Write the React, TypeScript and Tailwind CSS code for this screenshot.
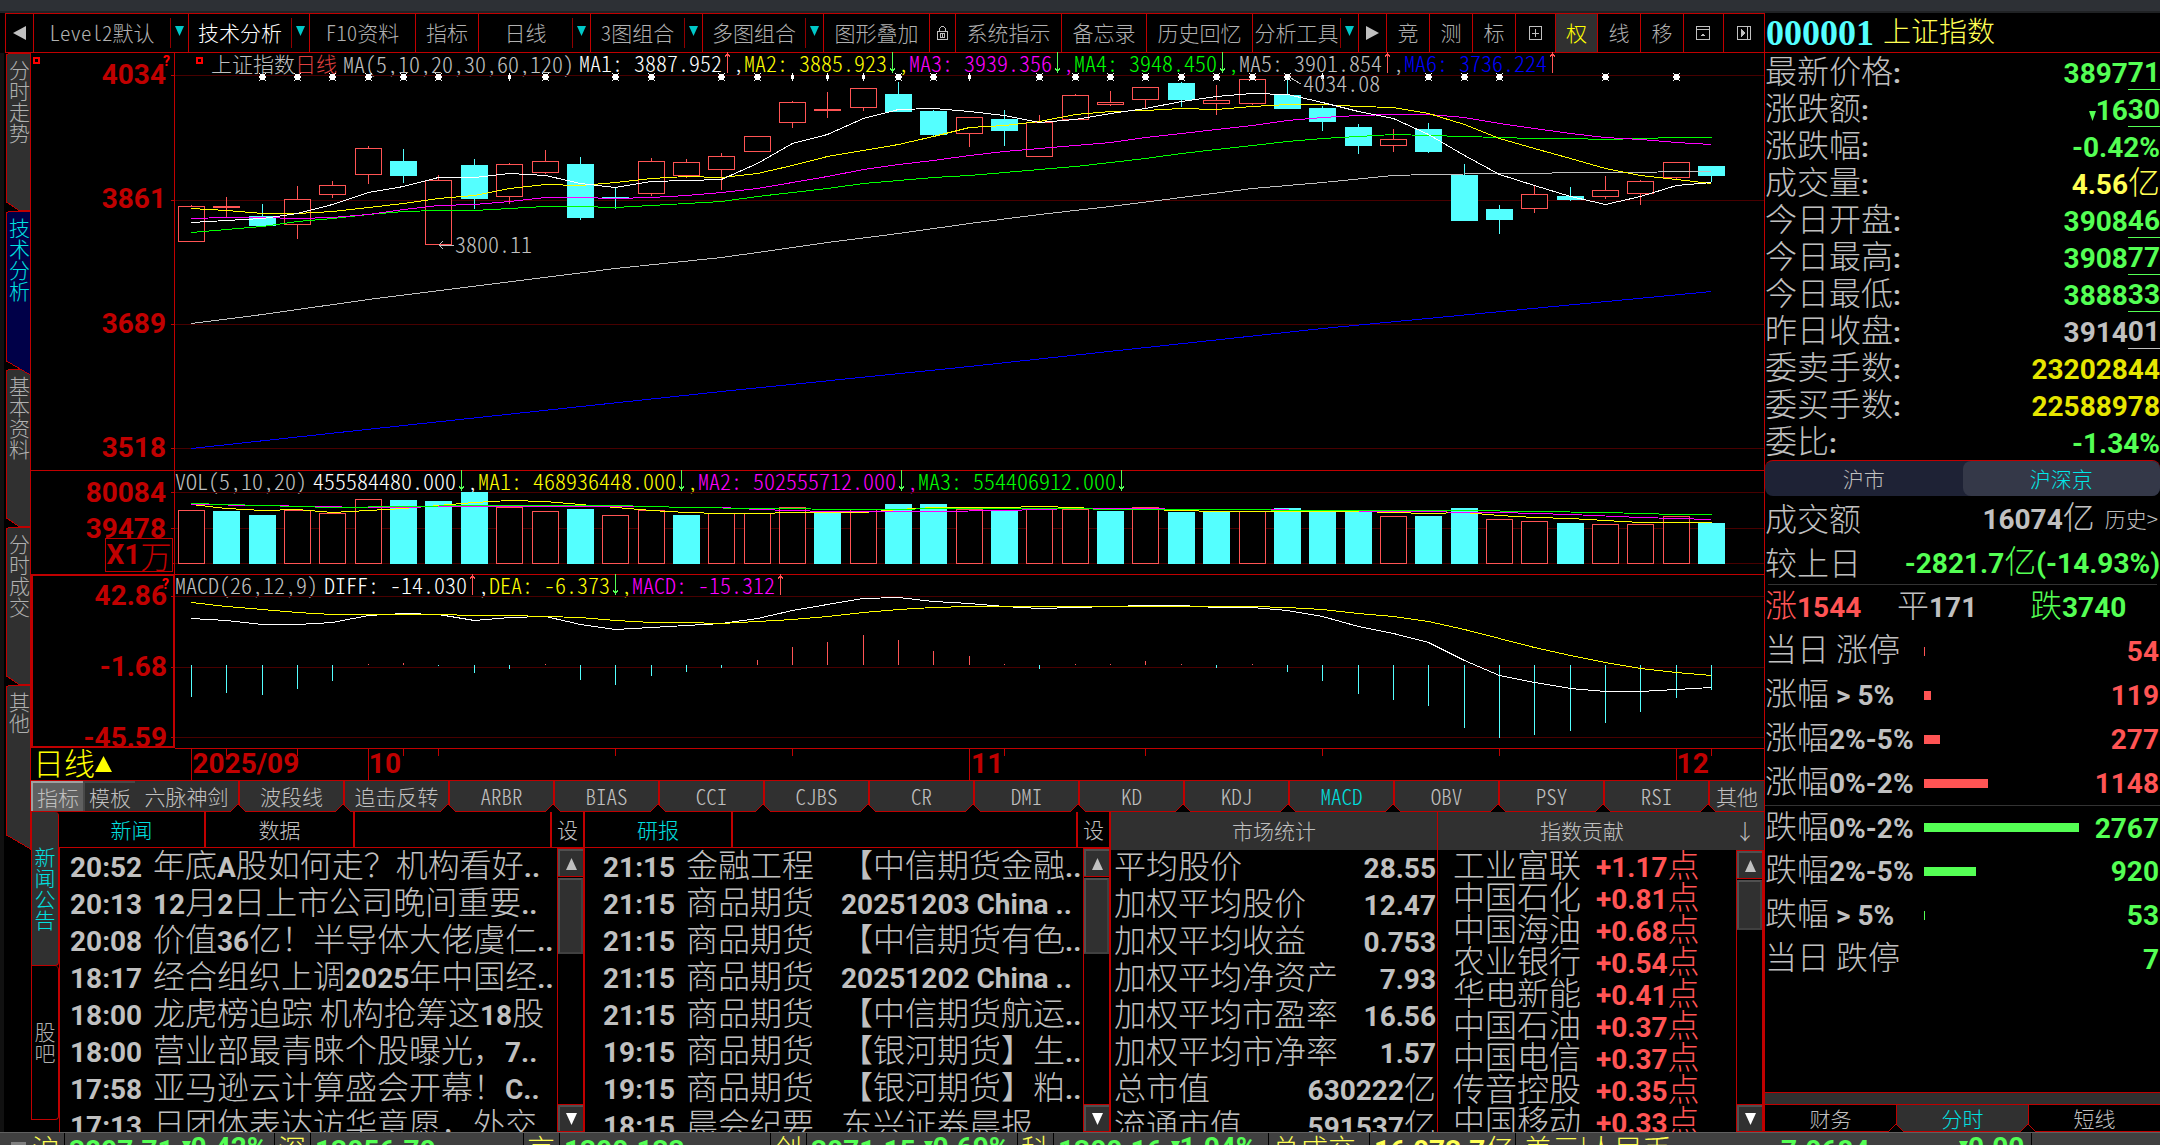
import type { ReactNode } from 'react';
import clsx from 'clsx';

type Dir = 'up' | 'down';

const STEP = 35.35;
const FIRST = 16;
const PLOT_W = 1589;
const HEADER_BOTTOM = { price: 75, volume: 492, macd: 596 };
const UP = '#ff5454';
const DOWN = '#54ffff';

const cx = (i: number) => Math.round(FIRST + i * STEP) + 0.5;

// [dir, body top, body bottom, high, low] in thirds of a pixel
const CANDLES: [Dir, number, number, number, number][] = [
  ['up', 619, 724, 615, 724],
  ['up', 619, 623, 591, 650],
  ['down', 648, 676, 612, 676],
  ['up', 598, 674, 558, 717],
  ['up', 556, 584, 543, 594],
  ['up', 445, 524, 438, 552],
  ['down', 483, 525, 447, 549],
  ['up', 541, 733, 525, 733],
  ['down', 495, 594, 477, 627],
  ['up', 493, 590, 489, 612],
  ['up', 484, 518, 450, 522],
  ['down', 492, 651, 471, 660],
  ['down', 592, 596, 562, 627],
  ['up', 484, 581, 474, 588],
  ['up', 487, 527, 477, 533],
  ['up', 469, 509, 459, 570],
  ['up', 409, 455, 409, 455],
  ['up', 307, 367, 303, 384],
  ['up', 328, 332, 276, 354],
  ['up', 265, 323, 265, 333],
  ['down', 282, 333, 246, 333],
  ['down', 333, 402, 330, 408],
  ['up', 352, 401, 352, 441],
  ['down', 357, 390, 330, 438],
  ['up', 367, 470, 345, 470],
  ['up', 286, 359, 282, 359],
  ['up', 307, 314, 273, 318],
  ['up', 262, 299, 262, 324],
  ['down', 249, 297, 246, 321],
  ['up', 301, 311, 255, 345],
  ['up', 238, 311, 238, 315],
  ['down', 285, 324, 234, 324],
  ['down', 324, 363, 318, 393],
  ['down', 381, 435, 372, 462],
  ['up', 418, 437, 387, 456],
  ['down', 387, 453, 369, 459],
  ['down', 525, 660, 492, 660],
  ['down', 627, 657, 615, 702],
  ['up', 583, 626, 556, 639],
  ['down', 588, 597, 561, 603],
  ['up', 571, 590, 528, 597],
  ['up', 544, 581, 540, 615],
  ['up', 487, 533, 487, 538],
  ['down', 498, 525, 498, 545],
];

type Point = [number, number];
const seq = (values: number[]): Point[] => values.map((v, i) => [i, v]);

const PRICE_LINES: { color: string; points: Point[] }[] = [
  {
    color: '#c0c0c0',
    points: [
      [0, 970], [2, 943], [5, 898], [12, 804], [15, 770], [16, 757], [18, 727], [20, 700], [22, 670],
      [24, 643], [26, 618], [28, 592], [30, 565], [32, 545], [34, 526], [35, 522], [37, 520], [40, 517], [43, 514],
    ],
  },
  { color: '#0000ff', points: [[0, 1345], [6, 1274], [15, 1174], [22, 1098], [32, 984], [43, 873]] },
  {
    color: '#00ff00',
    points: seq([
      697, 686, 677, 664, 654, 643, 634, 629, 631, 625, 619, 619, 620, 616, 610, 604, 589, 577, 565, 550, 539, 532,
      524, 517, 508, 499, 487, 473, 460, 448, 436, 424, 415, 409, 403, 404, 408, 412, 413, 415, 418, 415, 412, 412,
    ]),
  },
  {
    color: '#ff00ff',
    points: seq([
      653, 650, 652, 655, 652, 641, 627, 616, 613, 602, 590, 592, 595, 591, 584, 577, 565, 545, 529, 508, 493, 480,
      466, 454, 445, 436, 427, 412, 398, 388, 376, 360, 350, 346, 343, 341, 352, 370, 383, 400, 411, 418, 427, 433,
    ]),
  },
  {
    color: '#ffff00',
    points: seq([
      625, 631, 639, 640, 634, 622, 609, 594, 586, 565, 553, 555, 547, 535, 529, 532, 519, 495, 469, 449, 433, 408,
      382, 374, 362, 343, 334, 329, 325, 328, 318, 313, 313, 317, 322, 338, 373, 413, 444, 475, 505, 525, 538, 550,
    ]),
  },
  {
    color: '#ffffff',
    points: seq([
      667, 660, 655, 640, 612, 577, 558, 532, 532, 520, 526, 550, 562, 542, 541, 538, 488, 430, 401, 355, 328, 325,
      334, 346, 367, 358, 340, 323, 303, 288, 280, 283, 305, 332, 355, 402, 464, 523, 554, 587, 613, 589, 556, 545,
    ]),
  },
];

const STARS = [2, 3, 4, 5, 6, 7, 9, 10, 12, 13, 15, 16, 17, 18, 19, 20, 21, 22, 24, 25, 26, 27, 28, 29, 30, 31, 32, 35, 36, 37, 40, 42];
const NARROW_STARS = [9, 17, 18, 19, 22, 32];

const VOLUME_TOPS = [
  721, 723, 735, 721, 730, 688, 690, 693, 666, 711, 724, 717, 736, 721, 735, 730, 730, 712, 729, 718, 702, 702, 717,
  720, 717, 716, 723, 712, 726, 726, 722, 714, 722, 722, 739, 738, 714, 748, 754, 759, 763, 763, 739, 759,
];
const VOLUME_DOWN = [1, 2, 6, 7, 8, 11, 14, 18, 20, 21, 23, 26, 28, 29, 31, 32, 33, 35, 36, 39, 43];

const VOLUME_LINES: { color: string; points: Point[] }[] = [
  {
    color: '#ffff00',
    points: seq([
      702, 714, 720, 718, 726, 721, 715, 705, 695, 690, 694, 702, 712, 721, 727, 730, 730, 727, 727, 725, 717, 712,
      712, 712, 708, 712, 717, 717, 719, 722, 722, 722, 722, 722, 725, 730, 726, 734, 740, 744, 750, 757, 757, 757,
    ]),
  },
  {
    color: '#ff00ff',
    points: [
      [0, 702], [2, 706], [5, 710], [8, 708], [12, 708], [15, 710], [16, 717], [18, 722], [20, 724], [21, 722],
      [23, 720], [25, 715], [30, 716], [34, 722], [37, 727], [39, 733], [41, 741], [43, 748],
    ],
  },
  {
    color: '#00ff00',
    points: [
      [0, 700], [2, 704], [4, 712], [8, 706], [12, 706], [14, 712], [16, 714], [19, 718], [22, 714], [24, 714],
      [27, 718], [34, 721], [36, 719], [38, 722], [40, 727], [42, 733], [43, 733],
    ],
  },
];

const MACD_LINES: { color: string; points: Point[] }[] = [
  {
    color: '#ffffff',
    points: seq([
      145, 149, 163, 163, 157, 134, 130, 132, 149, 142, 137, 163, 178, 170, 165, 160, 145, 121, 103, 83, 80, 93, 98,
      108, 115, 110, 109, 104, 106, 112, 110, 120, 138, 168, 190, 215, 271, 316, 337, 355, 364, 364, 356, 352,
    ]),
  },
  {
    color: '#ffff00',
    points: seq([
      97, 109, 118, 127, 133, 133, 133, 133, 136, 136, 137, 142, 149, 155, 155, 158, 153, 147, 138, 127, 118, 112,
      109, 109, 109, 109, 109, 109, 109, 109, 109, 112, 118, 128, 139, 153, 177, 204, 231, 255, 277, 295, 307, 316,
    ]),
  },
];
const MACD_BARS = [
  380, 369, 375, 357, 333, 283, 279, 289, 309, 297, 282, 330, 345, 318, 306, 293, 270, 230, 216, 195, 210, 243, 258,
  282, 297, 282, 282, 273, 282, 294, 282, 306, 333, 372, 390, 408, 474, 504, 495, 483, 459, 426, 384, 360,
];

const MONTH_TICKS = [0, 5, 22, 42];
const DAY_TICKS = [1, 3, 6, 7, 12, 17, 23, 27, 32, 37, 43];

const ASCII_RUN = /([\x20-\x7e]+)/;

/* Han text in the regular weight, digits and latin in the heavy one */
const Mix = ({ text }: { text: string }) => (
  <>
    {text.split(ASCII_RUN).map((part, i) =>
      ASCII_RUN.test(part) ? (
        <span key={i} className="font-[Roboto,sans-serif] text-[28px] font-bold whitespace-pre">
          {part}
        </span>
      ) : (
        part
      ),
    )}
  </>
);

const path = (points: Point[], toY: (v: number) => number) =>
  points.map(([i, v]) => `${cx(i)},${Math.round(toY(v)) + 0.5}`).join(' ');

const Plot = ({ height, grid, children }: { height: number; grid: number[]; children: ReactNode }) => (
  <svg
    viewBox={`0 0 ${PLOT_W} ${height}`}
    height={height}
    preserveAspectRatio="none"
    shapeRendering="crispEdges"
    className="block w-full overflow-visible"
    fill="none"
  >
    {grid.map((y) => (
      <line key={y} x1="0" x2={PLOT_W} y1={y + 0.5} y2={y + 0.5} stroke="#480000" />
    ))}
    {grid.map((y) => (
      <line key={`t${y}`} x1="-4" x2="0" y1={y + 0.5} y2={y + 0.5} stroke="#c00000" />
    ))}
    {children}
  </svg>
);

const Star = ({ x, narrow }: { x: number; narrow: boolean }) =>
  narrow ? (
    <path d={`M${x - 1.5} 0H${x + 1.5}V4H${x - 1.5}ZM${x - 0.5} -2H${x + 0.5}V6H${x - 0.5}Z`} fill="#fff" />
  ) : (
    <g fill="#fff">
      <rect x={x - 2.5} y="-1" width="5" height="6" />
      <path d={`M${x - 3.5} -2h1v1h-1zM${x + 2.5} -2h1v1h-1zM${x - 3.5} 5h1v1h-1zM${x + 2.5} 5h1v1h-1zM${x - 3.5} 1h7v2h-7z`} />
    </g>
  );

const PriceChart = () => {
  const toY = (v: number) => v / 3 - HEADER_BOTTOM.price;
  return (
    <Plot height={395} grid={[0, 125, 249, 373]}>
      {CANDLES.map(([dir, top, bottom, high, low], i) => {
        const color = dir === 'up' ? UP : DOWN;
        const y = Math.round(toY(top));
        const h = Math.max(1, Math.round((bottom - top) / 3));
        return (
          <g key={i} stroke={color}>
            <line x1={cx(i)} x2={cx(i)} y1={toY(high)} y2={y} />
            <line x1={cx(i)} x2={cx(i)} y1={y + h} y2={toY(low)} />
            <rect x={cx(i) - 13} y={y + 0.5} width="26" height={h} fill={dir === 'up' ? '#000' : color} />
          </g>
        );
      })}
      {PRICE_LINES.map(({ color, points }) => (
        <polyline key={color} points={path(points, toY)} stroke={color} />
      ))}
      {STARS.map((i) => (
        <Star key={i} x={cx(i)} narrow={NARROW_STARS.includes(i)} />
      ))}
      <path d="M1114 2L1126 9M264 170H279M268 166L264 170L268 174" stroke="#c0c0c0" />
    </Plot>
  );
};

const VolumeChart = () => {
  const toY = (v: number) => v / 3 + 270 - HEADER_BOTTOM.volume;
  return (
    <Plot height={82} grid={[0, 36, 71]}>
      {VOLUME_TOPS.map((v, i) => {
        const down = VOLUME_DOWN.includes(i);
        const y = Math.round(toY(v));
        return (
          <rect
            key={i}
            x={cx(i) - 13}
            y={y + 0.5}
            width="26"
            height={71 - y}
            stroke={down ? DOWN : UP}
            fill={down ? DOWN : '#000'}
          />
        );
      })}
      {VOLUME_LINES.map(({ color, points }) => (
        <polyline key={color} points={path(points, toY)} stroke={color} />
      ))}
    </Plot>
  );
};

const MacdChart = () => {
  const toY = (v: number) => v / 3 + 570 - HEADER_BOTTOM.macd;
  return (
    <Plot height={152} grid={[0, 71, 141]}>
      {MACD_BARS.map((v, i) => (
        <line key={i} x1={cx(i)} x2={cx(i)} y1={toY(285)} y2={toY(v)} stroke={v < 285 ? UP : DOWN} />
      ))}
      {MACD_LINES.map(({ color, points }) => (
        <polyline key={color} points={path(points, toY)} stroke={color} />
      ))}
    </Plot>
  );
};

const Arrow = ({ dir }: { dir: Dir }) => (
  <svg width="11" height="22" viewBox="0 0 11 22" shapeRendering="crispEdges" fill="none" stroke={dir === 'up' ? UP : '#54ff54'}>
    <path d={dir === 'up' ? 'M5.5 1V21M3 5L5.5 1L8 5' : 'M5.5 0V20M3 16L5.5 20L8 16'} />
  </svg>
);

interface Reading {
  text: string;
  dir: Dir;
  color: string;
  last?: boolean;
}

const Readings = ({ items }: { items: Reading[] }) => (
  <>
    {items.map(({ text, dir, color, last }) => (
      <span key={text} className={clsx('flex', color)}>
        {text}
        <Arrow dir={dir} />
        {!last && <span className="w-[11px]">,</span>}
      </span>
    ))}
  </>
);

const ChartHeader = ({ children, first }: { children: ReactNode; first?: boolean }) => (
  <div
    className={clsx(
      'flex h-[22px] items-center pb-[2px] text-[22px] leading-[21px] whitespace-pre text-[#c0c0c0] [font-feature-settings:"hwid"]',
      first ? 'pl-9' : 'border-t border-[#c00000]',
    )}
  >
    {children}
  </div>
);

const AXIS = 'font-[Roboto,sans-serif] text-[28px] leading-[28px] font-bold text-[#c00000]';

const TOOLS: { label: string; width: string; menu?: boolean; state?: 'bright' | 'on' }[] = [
  { label: 'Level2默认', width: 'w-[155px]', menu: true },
  { label: '技术分析', width: 'w-[121px]', menu: true, state: 'bright' },
  { label: 'F10资料', width: 'w-[106px]' },
  { label: '指标', width: 'w-[63px]' },
  { label: '日线', width: 'w-[112px]', menu: true },
  { label: '3图组合', width: 'w-[112px]', menu: true },
  { label: '多图组合', width: 'w-[121px]', menu: true },
  { label: '图形叠加', width: 'w-[106px]' },
  { label: 'lock', width: 'w-[26px]' },
  { label: '系统指示', width: 'w-[106px]' },
  { label: '备忘录', width: 'w-[85px]' },
  { label: '历史回忆', width: 'w-[106px]' },
  { label: '分析工具', width: 'w-[106px]', menu: true },
  { label: 'next', width: 'w-[28px]' },
  { label: '竞', width: 'w-[43px]' },
  { label: '测', width: 'w-[43px]' },
  { label: '标', width: 'w-[43px]' },
  { label: 'grid', width: 'w-[40px]' },
  { label: '权', width: 'w-[42px]', state: 'on' },
  { label: '线', width: 'w-[43px]' },
  { label: '移', width: 'w-[43px]' },
  { label: 'dock', width: 'w-[40px]' },
  { label: 'expand', width: 'w-[40px]' },
];

const TOOL_ICONS: Record<string, ReactNode> = {
  lock: (
    <svg width="13" height="16" viewBox="0 0 13 16" fill="none" stroke="#c0c0c0" shapeRendering="crispEdges">
      <path d="M3.5 5.5V3.5L5.5 1.5H7.5L9.5 3.5V6.5M1.5 6.5H11.5V14.5H1.5ZM4.5 8.5H8.5V12.5H4.5ZM6.5 9V12" />
    </svg>
  ),
  next: (
    <svg width="13" height="14" viewBox="0 0 13 14" fill="#c0c0c0">
      <path d="M0 0L13 7L0 14Z" />
    </svg>
  ),
  grid: (
    <svg width="13" height="14" viewBox="0 0 13 14" fill="none" stroke="#c0c0c0" shapeRendering="crispEdges">
      <path d="M.5 .5H12.5V13.5H.5ZM6.5 3V11M3 7H10" />
    </svg>
  ),
  dock: (
    <svg width="15" height="14" viewBox="0 0 15 14" fill="none" stroke="#c0c0c0" shapeRendering="crispEdges">
      <path d="M.5 .5H13.5V13.5H.5ZM.5 3.5H13.5M5 9.5H9M6 8.5H8" />
    </svg>
  ),
  expand: (
    <svg width="15" height="14" viewBox="0 0 15 14" fill="none" stroke="#c0c0c0" shapeRendering="crispEdges">
      <path d="M.5 .5H13.5V13.5H.5ZM10.5 .5V13.5" />
      <path d="M4 3L8 7L4 11Z" fill="#c0c0c0" />
    </svg>
  ),
};

const Toolbar = () => (
  <nav className="ml-[5px] flex h-10 shrink-0 border border-r-0 border-[#c00000] text-[21px] text-[#b0b0b0] [font-feature-settings:'hwid']">
    <button aria-label="prev" className="flex w-[28px] items-center justify-center border-r border-[#c00000]">
      <svg width="13" height="14" viewBox="0 0 13 14" fill="#c0c0c0">
        <path d="M13 0L0 7L13 14Z" />
      </svg>
    </button>
    {TOOLS.map(({ label, width, menu, state }) => (
      <button
        key={label}
        aria-label={label}
        className={clsx(
          'flex shrink-0 items-center border-[#c00000] whitespace-nowrap last:flex-1 not-last:border-r',
          width,
          state === 'bright' && 'text-white',
          state === 'on' && 'bg-[#303030] text-[#ffff00]',
        )}
      >
        <span className="flex flex-1 items-center justify-center">{TOOL_ICONS[label] ?? label}</span>
        {menu && (
          <span className="flex h-[30px] w-[18px] justify-center border-l border-[#900000] pt-2">
            <svg width="9" height="10" viewBox="0 0 9 10" fill="#00c8c8">
              <path d="M0 0H9L4.5 10Z" />
            </svg>
          </span>
        )}
      </button>
    ))}
  </nav>
);

const SIDE_TABS = ['分时走势', '技术分析', '基本资料', '分时成交', '其他'];

const SideTabs = () => (
  <nav className="flex w-[27px] shrink-0 flex-col">
    {SIDE_TABS.map((tab, i) => {
      const active = i === 1;
      return (
        <button
          key={tab}
          className={clsx(
            'relative flex h-[158px] shrink-0 justify-center pt-[6px] pl-1 text-[21px] leading-[21px]',
            active ? 'z-10 text-[#00e0e0]' : 'text-[#b0b0b0]',
          )}
        >
          <svg className="absolute inset-0 h-full w-full overflow-visible" viewBox="0 0 27 158" shapeRendering="crispEdges">
            <path
              d={i === 4 || active ? 'M2.5 2L5 .5H26.5V164L2.5 150Z' : 'M2.5 2L5 .5H26.5V157.5H15L2.5 149Z'}
              fill={active ? '#000048' : '#303030'}
              stroke="#c00000"
            />
          </svg>
          <span className="relative w-[21px]">{tab}</span>
        </button>
      );
    })}
  </nav>
);

const INDICATORS = ['六脉神剑', '波段线', '追击反转', 'ARBR', 'BIAS', 'CCI', 'CJBS', 'CR', 'DMI', 'KD', 'KDJ', 'MACD', 'OBV', 'PSY', 'RSI'];

const Notch = () => (
  <svg width="16" height="8" viewBox="0 0 16 8" className="absolute -right-2 -bottom-px z-10" shapeRendering="crispEdges">
    <path d="M0 8L8 0L16 8Z" fill="#000" stroke="#c00000" />
  </svg>
);

const IndicatorTabs = () => (
  <div className="flex h-8 shrink-0 border-y border-[#c00000] text-[21px] text-[#c0c0c0] [font-feature-settings:'hwid']">
    <button className="w-[52px] border-t-2 border-l-2 border-[#a0a0a0] bg-[#606060] leading-[26px]">指标</button>
    <button className="w-[52px] border-t-2 border-l-2 border-[#484848] bg-[#303030] leading-[26px]">模板</button>
    {INDICATORS.map((name) => (
      <button
        key={name}
        className={clsx(
          'relative flex-1 border-r-2 border-[#c00000] bg-[#303030]',
          name === 'MACD' && 'text-[#00e0e0]',
        )}
      >
        {name}
        <Notch />
      </button>
    ))}
    <button className="w-[54px] bg-[#303030]">其他</button>
  </div>
);

const NEWS = [
  ['20:52', '年底A股如何走？机构看好..'],
  ['20:13', '12月2日上市公司晚间重要..'],
  ['20:08', '价值36亿！半导体大佬虞仁..'],
  ['18:17', '经合组织上调2025年中国经..'],
  ['18:00', '龙虎榜追踪 机构抢筹这18股'],
  ['18:00', '营业部最青睐个股曝光，7..'],
  ['17:58', '亚马逊云计算盛会开幕！C..'],
  ['17:13', '日团体表达访华意愿，外交..'],
];

const REPORTS = [
  ['21:15', '金融工程', '【中信期货金融..'],
  ['21:15', '商品期货', '20251203 China ..'],
  ['21:15', '商品期货', '【中信期货有色..'],
  ['21:15', '商品期货', '20251202 China ..'],
  ['21:15', '商品期货', '【中信期货航运..'],
  ['19:15', '商品期货', '【银河期货】生..'],
  ['19:15', '商品期货', '【银河期货】粕..'],
  ['18:15', '晨会纪要', '东兴证券晨报'],
];

const STATS = [
  ['平均股价', '28.55'],
  ['加权平均股价', '12.47'],
  ['加权平均收益', '0.753'],
  ['加权平均净资产', '7.93'],
  ['加权平均市盈率', '16.56'],
  ['加权平均市净率', '1.57'],
  ['总市值', '630222亿'],
  ['流通市值', '591537亿'],
];

const CONTRIBUTIONS = [
  ['工业富联', '+1.17'],
  ['中国石化', '+0.81'],
  ['中国海油', '+0.68'],
  ['农业银行', '+0.54'],
  ['华电新能', '+0.41'],
  ['中国石油', '+0.37'],
  ['中国电信', '+0.37'],
  ['传音控股', '+0.35'],
  ['中国移动', '+0.33'],
];

const ScrollBar = ({ thumb }: { thumb: string }) => (
  <div className="flex w-7 shrink-0 flex-col border border-r-2 border-[#c00000] bg-black">
    <button aria-label="up" className="flex h-[27px] items-center justify-center border-t-2 border-l-2 border-[#505050] bg-[#303030]">
      <svg width="11" height="12" viewBox="0 0 11 12" fill="#c0c0c0">
        <path d="M5.5 0L11 12H0Z" />
      </svg>
    </button>
    <div className="flex-1 border-y border-[#c00000] pt-px">
      <div className={clsx('border-2 border-r-[#404040] border-b-[#404040] border-t-[#505050] border-l-[#505050] bg-[#303030]', thumb)} />
    </div>
    <button aria-label="down" className="flex h-[26px] items-center justify-center border-t-2 border-l-2 border-[#505050] bg-[#303030]">
      <svg width="11" height="12" viewBox="0 0 11 12" fill="#fff">
        <path d="M0 0H11L5.5 12Z" />
      </svg>
    </button>
  </div>
);

const HEADER_TAB = 'border-r-2 border-[#c00000]';

const BottomPanels = () => (
  <div className="flex min-h-0 flex-1 text-[#c0c0c0]">
    <nav className="flex w-7 shrink-0 flex-col text-[21px] leading-[21px]">
      <button className="flex h-[154px] items-center justify-center rounded-r border border-t-0 border-[#c00000] bg-[#303030] pb-[2px] text-[#00e0e0]">
        <span className="w-[21px]">新闻公告</span>
      </button>
      <button className="flex h-[154px] items-center justify-center rounded-r border border-t-0 border-[#c00000] pb-[2px] text-[#b0b0b0]">
        <span className="w-[21px]">股吧</span>
      </button>
    </nav>

    <section className="flex w-[526px] shrink-0 flex-col">
      <div className="flex h-9 shrink-0 border-b border-[#c00000] text-[21px]">
        <button className={clsx(HEADER_TAB, 'w-[147px] text-[#00e0e0]')}>新闻</button>
        <button className={clsx(HEADER_TAB, 'w-[149px]')}>数据</button>
        <span className={clsx(HEADER_TAB, 'flex-1')} />
        <button className={clsx(HEADER_TAB, 'w-[33px]')}>设</button>
      </div>
      <div className="flex min-h-0 flex-1">
        <ul className="flex-1 overflow-hidden border-l border-[#c00000] pl-[10px] text-[32px] leading-[31px] whitespace-nowrap">
          {NEWS.map(([time, title]) => (
            <li key={title} className="flex h-[37px]">
              <span className="w-[83px] shrink-0">
                <Mix text={time} />
              </span>
              <a href="#news">
                <Mix text={title} />
              </a>
            </li>
          ))}
        </ul>
        <ScrollBar thumb="h-[76px]" />
      </div>
    </section>

    <section className="flex w-[526px] shrink-0 flex-col">
      <div className="flex h-9 shrink-0 border-b border-[#c00000] text-[21px]">
        <button className={clsx(HEADER_TAB, 'w-[148px] text-[#00e0e0]')}>研报</button>
        <span className={clsx(HEADER_TAB, 'flex-1')} />
        <button className={clsx(HEADER_TAB, 'w-[33px]')}>设</button>
      </div>
      <div className="flex min-h-0 flex-1">
        <ul className="flex-1 overflow-hidden pl-[18px] text-[32px] leading-[31px] whitespace-nowrap">
          {REPORTS.map(([time, kind, title], i) => (
            <li key={i} className="flex h-[37px]">
              <span className="w-[83px] shrink-0">
                <Mix text={time} />
              </span>
              <span className="w-[155px] shrink-0">{kind}</span>
              <a href="#report">
                <Mix text={title} />
              </a>
            </li>
          ))}
        </ul>
        <ScrollBar thumb="h-[76px]" />
      </div>
    </section>

    <section className="flex min-w-0 flex-1 flex-col border-r border-[#c00000]">
      <h2 className="h-[38px] shrink-0 bg-[#303030] text-center text-[21px] leading-[37px]">市场统计</h2>
      <div className="min-h-0 flex-1 overflow-hidden">
        <table className="block w-full text-[32px] leading-[29px] whitespace-nowrap">
          <tbody className="block">
            {STATS.map(([name, value]) => (
              <tr key={name} className="flex h-[37px] justify-between pr-px pl-[3px]">
                <td>{name}</td>
                <td>
                  <Mix text={value} />
                </td>
              </tr>
            ))}
          </tbody>
        </table>
      </div>
    </section>

    <section className="flex min-w-0 flex-1 flex-col">
      <h2 className="flex h-[38px] shrink-0 bg-[#303030] text-[21px] leading-[37px]">
        <span className="flex-1 text-center">指数贡献</span>
        <span className="w-[38px] text-center">↓</span>
      </h2>
      <div className="flex min-h-0 flex-1">
        <div className="flex-1 overflow-hidden">
          <table className="ml-[15px] block text-[32px] leading-[26px] whitespace-nowrap">
            <tbody className="block">
              {CONTRIBUTIONS.map(([name, value]) => (
                <tr key={name} className="flex h-8">
                  <td className="w-[143px]">{name}</td>
                  <td className="text-[#ff5454]">
                    <Mix text={value} />点
                  </td>
                </tr>
              ))}
            </tbody>
          </table>
        </div>
        <ScrollBar thumb="h-[50px]" />
      </div>
    </section>
  </div>
);

const Charts = () => (
  <div className="text-[#c0c0c0]">
    <div className="flex">
      <div className={clsx(AXIS, 'relative flex w-[144px] shrink-0 flex-col justify-between border-r border-[#c00000] py-2 pr-2 text-right')}>
        <span>4034</span>
        <span>3861</span>
        <span>3689</span>
        <span>3518</span>
        <span className="absolute top-1 left-[2px] h-[7px] w-[7px] border-2 border-[#ff0000]" />
        <span className="absolute top-0 right-1 text-[14px] leading-[16px] text-[#ff0000]">?</span>
      </div>
      <div className="relative min-w-0 flex-1">
        <ChartHeader first>
          <span className="text-[21px]">上证指数</span>
          <span className="mr-[6px] text-[21px] text-[#e04040]">日线</span>
          <span className="w-[236px]">MA(5,10,20,30,60,120)</span>
          <Readings
            items={[
              { text: 'MA1: 3887.952', dir: 'up', color: 'text-white' },
              { text: 'MA2: 3885.923', dir: 'down', color: 'text-[#ffff00]' },
              { text: 'MA3: 3939.356', dir: 'down', color: 'text-[#ff00ff]' },
              { text: 'MA4: 3948.450', dir: 'down', color: 'text-[#00ff00]' },
              { text: 'MA5: 3901.854', dir: 'up', color: 'text-[#c0c0c0]' },
              { text: 'MA6: 3736.224', dir: 'up', color: 'text-[#0000ff]', last: true },
            ]}
          />
        </ChartHeader>
        <PriceChart />
        <span className="absolute top-1 left-[21px] h-[7px] w-[7px] border-2 border-[#ff0000]" />
        <span className="absolute top-[18px] left-[71%] text-[22px] leading-[22px] [font-feature-settings:'hwid']">4034.08</span>
        <span className="absolute top-[179px] left-[280px] text-[22px] leading-[22px] [font-feature-settings:'hwid']">3800.11</span>
      </div>
    </div>

    <div className="flex">
      <div className={clsx(AXIS, 'relative flex w-[144px] shrink-0 flex-col gap-2 border-t border-r border-[#c00000] pt-2 pr-2 text-right')}>
        <span>80084</span>
        <span>39478</span>
        <span className="absolute right-[1px] bottom-[2px] flex h-[34px] w-[68px] items-center justify-center border border-[#c00000] bg-black">
          X1<span className="font-['Noto_Sans_CJK_SC',sans-serif] text-[31px] font-light">万</span>
        </span>
      </div>
      <div className="min-w-0 flex-1">
        <ChartHeader>
          <span className="w-[138px]">VOL(5,10,20)</span>
          <Readings
            items={[
              { text: '455584480.000', dir: 'down', color: 'text-white' },
              { text: 'MA1: 468936448.000', dir: 'down', color: 'text-[#ffff00]' },
              { text: 'MA2: 502555712.000', dir: 'down', color: 'text-[#ff00ff]' },
              { text: 'MA3: 554406912.000', dir: 'down', color: 'text-[#00ff00]', last: true },
            ]}
          />
        </ChartHeader>
        <VolumeChart />
      </div>
    </div>

    <div className="flex">
      <div className={clsx(AXIS, 'relative flex h-[174px] w-[144px] shrink-0 flex-col gap-[43px] overflow-hidden border-2 border-[#c00000] pt-[6px] pr-[6px] text-right')}>
        <span>42.86</span>
        <span>-1.68</span>
        <span>-45.59</span>
        <span className="absolute top-0 right-1 text-[14px] leading-[16px] text-[#ff0000]">?</span>
      </div>
      <div className="min-w-0 flex-1">
        <ChartHeader>
          <span className="w-[149px]">MACD(26,12,9)</span>
          <Readings
            items={[
              { text: 'DIFF: -14.030', dir: 'up', color: 'text-white' },
              { text: 'DEA: -6.373', dir: 'down', color: 'text-[#ffff00]' },
              { text: 'MACD: -15.312', dir: 'up', color: 'text-[#ff00ff]', last: true },
            ]}
          />
        </ChartHeader>
        <MacdChart />
      </div>
    </div>

    <div className="flex h-8">
      <button className="flex w-[144px] shrink-0 items-center pb-1 pl-[2px] text-[31px] leading-[28px] text-[#ffff00]">
        日线
        <svg width="17" height="16" viewBox="0 0 17 16" fill="#ffff00" className="mt-1">
          <path d="M8.5 0L17 16H0Z" />
        </svg>
      </button>
      <div className={clsx(AXIS, 'relative min-w-0 flex-1 border-t border-[#c00000]')}>
        <svg viewBox={`0 0 ${PLOT_W} 31`} preserveAspectRatio="none" className="block h-[31px] w-full" stroke="#c00000" shapeRendering="crispEdges">
          {MONTH_TICKS.map((i) => (
            <line key={i} x1={cx(i)} x2={cx(i)} y1="0" y2="31" />
          ))}
          {DAY_TICKS.map((i) => (
            <line key={i} x1={cx(i)} x2={cx(i)} y1="0" y2="7" />
          ))}
        </svg>
        <span className="absolute top-px left-[1.1%]">2025/09</span>
        <span className="absolute top-px left-[12.2%]">10</span>
        <span className="absolute top-px left-[50.1%]">11</span>
        <span className="absolute top-px left-[94.5%]">12</span>
      </div>
    </div>
  </div>
);

const GREEN = 'text-[#54ff54]';

const QUOTES: { name: string; value: string; tail?: string; color: string; falling?: boolean }[] = [
  { name: '最新价格', value: '3897', tail: '71', color: GREEN },
  { name: '涨跌额', value: '16', tail: '30', color: GREEN, falling: true },
  { name: '涨跌幅', value: '-0.42%', color: GREEN },
  { name: '成交量', value: '4.56亿', color: 'text-[#ffff54]' },
  { name: '今日开盘', value: '3908', tail: '46', color: GREEN },
  { name: '今日最高', value: '3908', tail: '77', color: GREEN },
  { name: '今日最低', value: '3888', tail: '33', color: GREEN },
  { name: '昨日收盘', value: '3914', tail: '01', color: 'text-[#c0c0c0]' },
  { name: '委卖手数', value: '23202844', color: 'text-[#e6e600]' },
  { name: '委买手数', value: '22588978', color: 'text-[#e6e600]' },
  { name: '委比', value: '-1.34%', color: GREEN },
];

const BREADTH: [string, number, Dir][] = [
  ['当日 涨停', 54, 'up'],
  ['涨幅 > 5%', 119, 'up'],
  ['涨幅2%-5%', 277, 'up'],
  ['涨幅0%-2%', 1148, 'up'],
  ['跌幅0%-2%', 2767, 'down'],
  ['跌幅2%-5%', 920, 'down'],
  ['跌幅 > 5%', 53, 'down'],
  ['当日 跌停', 7, 'down'],
];

const QuotePanel = () => (
  <aside className="flex w-[396px] shrink-0 flex-col border-l border-[#c00000] text-[32px] text-[#c0c0c0]">
    <h1 className="flex h-10 shrink-0 items-center gap-[9px] border-b border-[#c00000] pl-px leading-none whitespace-nowrap">
      <span className="font-['Liberation_Serif',serif] text-[36px] font-bold text-[#54ffff]">000001</span>
      <span className="pb-[6px] text-[28px] text-[#ffff54]">上证指数</span>
    </h1>
    <table className="w-full whitespace-nowrap">
      <tbody>
        {QUOTES.map(({ name, value, tail, color, falling }) => (
          <tr key={name}>
            <td>
              <div className="h-[37px] leading-[32px]">
                <Mix text={`${name}:`} />
              </div>
            </td>
            <td className={color}>
              <div className="flex h-[37px] items-center justify-end pb-px leading-[33px]">
                {falling && (
                  <svg width="7" height="10" viewBox="0 0 7 10" fill="#54ff54" className="mt-4">
                    <path d="M0 0H7L3.5 10Z" />
                  </svg>
                )}
                <span>
                  <Mix text={value} />
                </span>
                {tail && (
                  <span className="border-b border-current">
                    <Mix text={tail} />
                  </span>
                )}
              </div>
            </td>
          </tr>
        ))}
      </tbody>
    </table>
    <div className="flex h-9 shrink-0 rounded-lg border-t border-[#c00000] bg-[#1e2235] text-[21px]">
      <button className="flex-1">沪市</button>
      <button className="flex-1 rounded-lg bg-[#343848] text-[#00e8e8]">沪深京</button>
    </div>
    <div className="flex h-11 shrink-0 items-center pr-[2px] leading-[41px]">
      <span className="flex-1 pb-[2px]">成交额</span>
      <span className="pb-[2px]">
        <Mix text="16074亿" />
      </span>
      <a href="#history" className="ml-[10px] text-[21px]">
        历史&gt;
      </a>
    </div>
    <div className="flex h-11 shrink-0 items-center justify-between pb-[2px] leading-[41px]">
      <span>较上日</span>
      <span className="text-[#54ff54]">
        <Mix text="-2821.7亿(-14.93%)" />
      </span>
    </div>
    <div className="mx-[3px] h-px shrink-0 bg-[#333]" />
    <div className="flex h-11 shrink-0 items-center pb-[3px] leading-[41px]">
      <span className="w-[132px] text-[#ff5454]">
        <Mix text="涨1544" />
      </span>
      <span className="w-[133px]">
        <Mix text="平171" />
      </span>
      <span className="text-[#54ff54]">
        <Mix text="跌3740" />
      </span>
    </div>
    {BREADTH.map(([label, count, dir]) => (
      <div
        key={label}
        className={clsx('flex h-11 shrink-0 items-center pr-[1px] leading-[40px]', label === '跌幅0%-2%' && 'border-t border-[#333]')}
      >
        <span className="w-[159px] shrink-0 pb-[3px] whitespace-nowrap">
          <Mix text={label} />
        </span>
        <span className="flex-1">
          {count > 10 && (
            <span
              className={clsx('block h-[9px]', dir === 'up' ? 'bg-[#ff5454]' : 'bg-[#54ff54]')}
              style={{ width: count < 100 ? 1 : Math.round((count / 2767) * 155) }}
            />
          )}
        </span>
        <span className={clsx('pb-[3px]', dir === 'up' ? 'text-[#ff5454]' : 'text-[#54ff54]')}>
          <Mix text={String(count)} />
        </span>
      </div>
    ))}
    <div className="flex-1" />
    <div className="h-3 shrink-0 border-t border-[#c00000] bg-[#303030]" />
    <nav className="flex h-7 shrink-0 border-y border-[#c00000] text-[21px] leading-[24px]">
      <button className="relative flex-1">
        财务
        <Notch />
      </button>
      <button className="relative flex-1 border-x border-[#c00000] bg-[#303030] text-[#00e0e0]">
        分时
        <Notch />
      </button>
      <button className="flex-1">短线</button>
    </nav>
  </aside>
);

interface Ticker {
  label: string;
  value: string;
  change?: string;
  color?: string;
  width: string;
  labelWidth: string;
}

const STATUS: Ticker[] = [
  { label: '沪', value: '3897.71', change: '0.42%', width: 'w-[246px]', labelWidth: 'w-9' },
  { label: '深', value: '13056.70', width: 'w-[249px]', labelWidth: 'w-9' },
  { label: '京', value: '1390.133', width: 'w-[247px]', labelWidth: 'w-9' },
  { label: '创', value: '3071.15', change: '0.69%', width: 'w-[247px]', labelWidth: 'w-9' },
  { label: '科', value: '1300.16', change: '1.04%', width: 'w-[251px]', labelWidth: 'w-9' },
  { label: '总成交', value: '16,073.7亿', color: 'text-[#ffff54]', width: 'w-[247px]', labelWidth: 'w-[101px]' },
];

const FallMark = () => (
  <svg width="9" height="10" viewBox="0 0 9 10" fill="currentColor" className="mt-2">
    <path d="M0 0H9L4.5 10Z" />
  </svg>
);

const StatusBar = () => (
  <footer className="flex h-[13px] shrink-0 overflow-hidden border-t border-[#606060] bg-[#404040] text-[28px] leading-[30px] whitespace-nowrap">
    <span className="w-[29px] shrink-0 pt-[9px] pl-[11px]">
      <span className="block h-4 w-[15px] bg-[#808080]" />
    </span>
    {STATUS.map(({ label, value, change, color, width, labelWidth }) => (
      <span key={label} className={clsx('flex shrink-0', width)}>
        <span className={clsx('shrink-0 border-r border-black pl-[3px] text-[#ffff54]', labelWidth)}>{label}</span>
        <span className={clsx('flex flex-1 gap-2 border-r border-black pl-1', color ?? 'text-[#54ff54]')}>
          <span>
            <Mix text={value} />
          </span>
          {change && (
            <span className="flex">
              <FallMark />
              <Mix text={change} />
            </span>
          )}
        </span>
      </span>
    ))}
    <span className="flex w-[516px] shrink-0 border-r border-black pl-2 text-[#54ff54]">
      <span className="w-[257px] text-[#ffff54]">美元|人民币</span>
      <span className="w-[178px]">
        <Mix text="7.0684" />
      </span>
      <FallMark />
      <Mix text="0.00" />
    </span>
  </footer>
);

export default function App() {
  return (
    <div className="flex h-screen flex-col overflow-hidden bg-black font-['Noto_Sans_CJK_SC',sans-serif] font-light">
      <div className="h-[13px] shrink-0 border-b-2 border-[#202224] bg-[#2d3035]" />
      <div className="flex min-h-0 flex-1">
        <main className="flex min-w-0 flex-1 flex-col">
          <Toolbar />
          <div className="flex min-h-0 flex-1">
            <div className="w-1 shrink-0 bg-[#111]" />
            <SideTabs />
            <div className="flex min-h-0 min-w-0 flex-1 flex-col">
              <Charts />
              <IndicatorTabs />
              <BottomPanels />
            </div>
          </div>
        </main>
        <QuotePanel />
      </div>
      <StatusBar />
    </div>
  );
}
